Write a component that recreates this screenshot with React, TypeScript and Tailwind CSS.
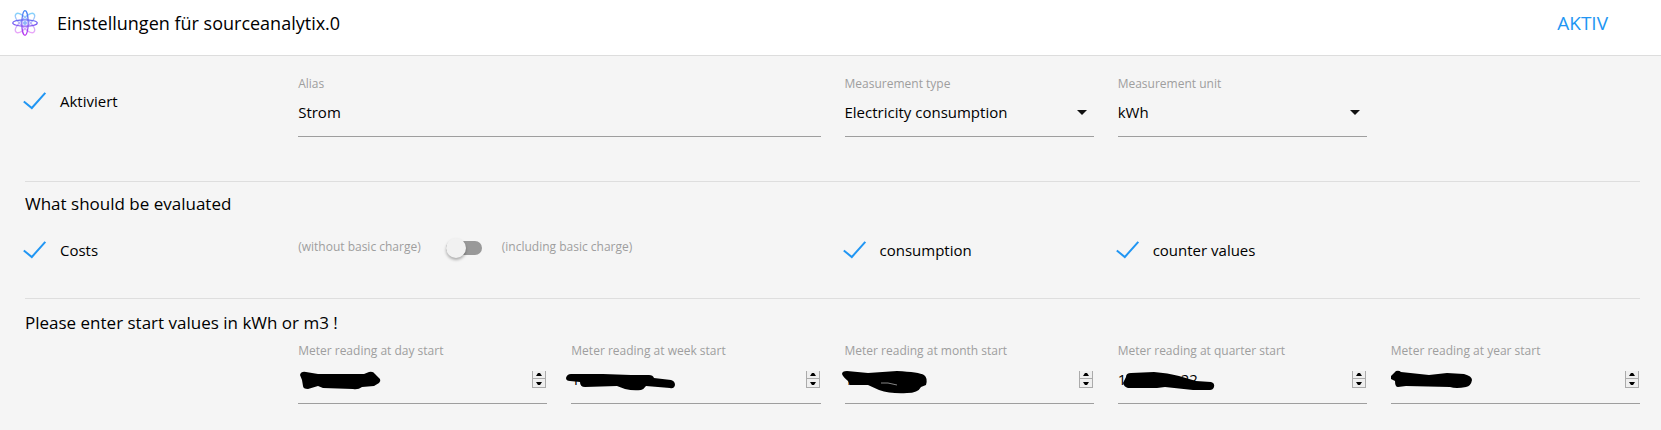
import { useId, useState } from "react";
import type { ReactNode } from "react";

const labelText = "text-xs text-[#9e9e9e]";

function Logo() {
  return (
    <svg viewBox="-13 -13 26 26" className="size-[26px] shrink-0" fill="none" aria-hidden="true">
      <defs>
        <linearGradient id="orbit" gradientUnits="userSpaceOnUse" x1="0" y1="-13" x2="0" y2="13">
          <stop offset="0" stopColor="#3f8cf5" />
          <stop offset="0.5" stopColor="#7460f2" />
          <stop offset="1" stopColor="#c433f0" />
        </linearGradient>
        <linearGradient id="orbitSoft" gradientUnits="userSpaceOnUse" x1="0" y1="-10" x2="0" y2="10">
          <stop offset="0" stopColor="#84d3fb" />
          <stop offset="0.5" stopColor="#b9b4fa" />
          <stop offset="1" stopColor="#eba6f8" />
        </linearGradient>
      </defs>
      <g stroke="url(#orbitSoft)" strokeWidth="1.3">
        <path d="M-9 -9C-7 -11 -2 -8 3 -3S11 7 9 9S2 8 -3 3S-11 -7 -9 -9Z" />
        <path d="M9 -9C7 -11 2 -8 -3 -3S-11 7 -9 9S-2 8 3 3S11 -7 9 -9Z" />
      </g>
      <g stroke="url(#orbit)" strokeWidth="1.2">
        <ellipse rx="3.2" ry="12.3" />
        <ellipse rx="12.3" ry="3.2" />
      </g>
      <circle r="2" fill="#8fb4fa" />
    </svg>
  );
}

function Check({ children }: { children: ReactNode }) {
  return (
    <label className="flex h-6 cursor-pointer items-center gap-[13px] text-[15px] text-black">
      <input type="checkbox" defaultChecked className="peer sr-only" />
      <svg
        viewBox="0 0 24 20"
        className="invisible -ml-0.5 h-5 w-6 shrink-0 peer-checked:visible"
        fill="none"
        stroke="#2196f3"
        strokeWidth="2"
        aria-hidden="true"
      >
        <path d="M0.8 10.5 8.8 17 22.3 1.8" />
      </svg>
      <span>{children}</span>
    </label>
  );
}

function Choice({ label, options }: { label: string; options: string[] }) {
  const id = useId();
  return (
    <div className="flex flex-col">
      <label htmlFor={id} className={`${labelText} leading-5`}>{label}</label>
      <div className="relative">
        <select
          id={id}
          className="h-[43px] w-full appearance-none border-b border-[#9e9e9e] bg-transparent pb-1.5 text-[15px] text-black outline-none"
        >
          {options.map((o) => (
            <option key={o}>{o}</option>
          ))}
        </select>
        <svg viewBox="0 0 10 5" className="pointer-events-none absolute top-4 right-[7px] h-[5px] w-2.5" fill="#111" aria-hidden="true">
          <path d="M0 0H10L5 5Z" />
        </svg>
      </div>
    </div>
  );
}

interface Reading {
  label: string;
  value: string;
  mark: string;
  streak?: string;
}

const readings: Reading[] = [
  {
    label: "Meter reading at day start",
    value: "",
    mark: "M2 14Q3 10 8 11L20 13 66 13 71 11Q75 10 77 13L82 18Q83 20 81 22L76 25 64 26Q60 29 55 28L25 27 20 25 10 28Q5 28 5 25L4 19Z",
  },
  {
    label: "Meter reading at week start",
    value: "1",
    mark: "M-5 17Q-4 13 0 13L32 13 60 14 78 14Q82 14 83 17L100 19Q104 20 104 24Q103 28 99 27L75 25Q73 28 70 29Q62 30 54 28L46 25 14 26Q9 26 9 21L-1 20Q-5 20 -5 17Z",
  },
  {
    label: "Meter reading at month start",
    value: "1",
    mark: "M-3 13Q-3 10 2 10L23 12 52 10Q74 11 79 14Q83 17 81 24L76 26Q73 32 62 32Q46 33 34 29L23 24 5 24 3 20Q-2 16 -3 13Z",
    streak: "M36 22L43 22 52 24",
  },
  {
    label: "Meter reading at quarter start",
    value: "1              22",
    mark: "M5 22L8 16Q8 12 13 12L36 11Q50 12 61 15L78 20 93 21Q97 22 96 26Q95 29 92 29L75 29 47 26 39 27 10 27Q6 26 5 22Z",
  },
  {
    label: "Meter reading at year start",
    value: "",
    mark: "M0 15L5 10Q8 9 10 11L38 14 56 12 73 13Q81 15 81 19Q80 25 75 26Q65 28 59 26L15 25 7 26Q4 26 4 20L0 18Z",
  },
];

function Spinner({ label }: { label: string }) {
  const button = "flex h-2 w-full items-center justify-center bg-[#efefef]";
  return (
    <div className="absolute top-2.5 right-px w-3.5 border-x border-b border-[#ababab]">
      <button type="button" aria-label={`${label}: increase`} className={`${button} border-b border-[#ababab]`}>
        <svg viewBox="0 0 6 3" className="h-[3px] w-1.5" aria-hidden="true">
          <path d="M0 3 2 0H4L6 3Z" />
        </svg>
      </button>
      <button type="button" aria-label={`${label}: decrease`} className={button}>
        <svg viewBox="0 0 6 3" className="h-[3px] w-1.5" aria-hidden="true">
          <path d="M0 0 2 3H4L6 0Z" />
        </svg>
      </button>
    </div>
  );
}

function ReadingField({ label, value, mark, streak }: Reading) {
  const id = useId();
  return (
    <div className="flex flex-col">
      <label htmlFor={id} className={`${labelText} leading-5`}>{label}</label>
      <div className="relative">
        <input
          id={id}
          type="text"
          inputMode="decimal"
          defaultValue={value}
          className="h-[43px] w-full border-b border-[#9e9e9e] bg-transparent pb-1.5 text-[15px] text-black outline-none"
        />
        <svg className="pointer-events-none absolute top-0 left-0 h-10 w-28 overflow-visible" fill="none" aria-hidden="true">
          <path d={mark} fill="#000" />
          {streak && <path d={streak} stroke="#ddd" strokeWidth="0.6" />}
        </svg>
        <Spinner label={label} />
      </div>
    </div>
  );
}

export default function App() {
  const aliasId = useId();
  const [active, setActive] = useState(true);
  return (
    <div className="min-h-screen bg-[#f5f5f5] font-['Open_Sans','Noto_Sans',sans-serif] text-black">
      <header className="flex h-14 items-center border-b border-[#dddddd] bg-white pr-[53px] pb-2.5 pl-3">
        <Logo />
        <h1 className="ml-[19px] text-lg leading-6">Einstellungen für sourceanalytix.0</h1>
        <button type="button" aria-pressed={active} onClick={() => setActive(!active)} className="ml-auto text-[19px] leading-6 text-[#2196f3]">
          AKTIV
        </button>
      </header>

      <main className="pr-[21px] pl-[25px]">
        <section className="grid grid-cols-6 gap-6 pt-[18px] pb-11">
          <div className="pt-[15px]">
            <Check>Aktiviert</Check>
          </div>
          <div className="col-span-2 flex flex-col">
            <label htmlFor={aliasId} className={`${labelText} leading-5`}>Alias</label>
            <input
              id={aliasId}
              type="text"
              defaultValue="Strom"
              className="h-[43px] w-full border-b border-[#9e9e9e] bg-transparent pb-1.5 text-[15px] text-black outline-none"
            />
          </div>
          <Choice label="Measurement type" options={["Electricity consumption"]} />
          <Choice label="Measurement unit" options={["kWh"]} />
        </section>

        <section className="border-t border-[#dedede] pt-2 pb-9">
          <h2 className="text-[17px] leading-7">What should be evaluated</h2>
          <div className="mt-5 grid grid-cols-6 gap-6">
            <Check>Costs</Check>
            <label className={`${labelText} col-span-2 flex h-5 cursor-pointer items-center`}>
              <span className="pb-0.5">(without basic charge)</span>
              <input type="checkbox" role="switch" className="peer sr-only" />
              <span className="mr-5 ml-[25px] flex h-3.5 w-9 items-center rounded-full bg-[#999999] peer-checked:justify-end">
                <span className="size-5 rounded-full bg-[#f1f1f1] shadow-[0_2px_3px_rgba(0,0,0,0.3)]" />
              </span>
              <span className="pb-0.5">(including basic charge)</span>
            </label>
            <Check>consumption</Check>
            <Check>counter values</Check>
          </div>
        </section>

        <section className="border-t border-[#dedede] pt-2.5">
          <h2 className="text-[17px] leading-7">Please enter start values in kWh or m3 !</h2>
          <div className="mt-1 grid grid-cols-6 gap-6">
            <div />
            {readings.map((r) => (
              <ReadingField key={r.label} {...r} />
            ))}
          </div>
        </section>
      </main>
    </div>
  );
}
